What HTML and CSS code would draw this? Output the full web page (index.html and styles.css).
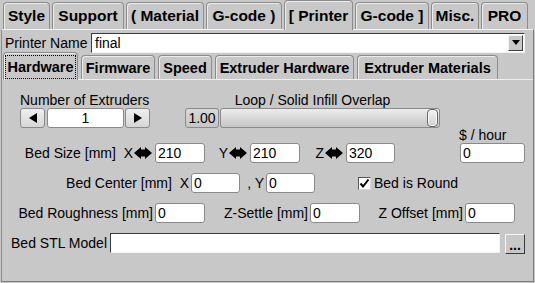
FILE: index.html
```html
<!DOCTYPE html>
<html>
<head>
<meta charset="utf-8">
<link rel="stylesheet" href="styles.css">
</head>
<body>
<div class="app">
  <div class="tabs-top">
    <div class="ttab w-style">Style</div>
    <div class="ttab w-support">Support</div>
    <div class="ttab w-material">( Material</div>
    <div class="ttab w-gcode1">G-code )</div>
    <div class="ttab sel w-printer">[ Printer</div>
    <div class="ttab w-gcode2">G-code ]</div>
    <div class="ttab w-misc">Misc.</div>
    <div class="ttab w-pro">PRO</div>
  </div>
  <div class="panel">
    <div class="pname">
      <span>Printer Name</span>
      <div class="choice">
        <span class="choice-val">final</span>
        <span class="ddbtn"><svg width="8" height="6" viewBox="0 0 8 6"><polygon points="0,0 8,0 4,5" fill="#000"/></svg></span>
      </div>
    </div>
    <div class="tabs-sub">
      <div class="stab sel w-hw"><span class="focus">Hardware</span></div>
      <div class="stab w-fw">Firmware</div>
      <div class="stab w-sp">Speed</div>
      <div class="stab w-eh">Extruder Hardware</div>
      <div class="stab w-em">Extruder Materials</div>
    </div>
    <div class="sub">
      <div class="row-a">
        <div class="extr">
          <div class="cap">Number of Extruders</div>
          <div class="counter">
            <div class="cbtn"><svg width="8" height="10" viewBox="0 0 8 10"><polygon points="0,5 8,0 8,10" fill="#000"/></svg></div>
            <div class="cval">1</div>
            <div class="cbtn"><svg width="8" height="10" viewBox="0 0 8 10"><polygon points="0,0 8,5 0,10" fill="#000"/></svg></div>
          </div>
        </div>
        <div class="loop">
          <div class="cap center">Loop / Solid Infill Overlap</div>
          <div class="slider">
            <div class="sval">1.00</div>
            <div class="track"><div class="knob"></div></div>
          </div>
        </div>
      </div>
      <div class="row-hour">$ / hour</div>
      <div class="row">
        <div class="g g-size"><span>Bed Size [mm]  X</span><svg class="arr" viewBox="0 0 18 12"><polygon points="0,6 7,0 7,2.5 11,2.5 11,0 18,6 11,12 11,9.5 7,9.5 7,12" fill="#000"/></svg><div class="in">210</div></div>
        <div class="g g-yz"><span>Y</span><svg class="arr" viewBox="0 0 18 12"><polygon points="0,6 7,0 7,2.5 11,2.5 11,0 18,6 11,12 11,9.5 7,9.5 7,12" fill="#000"/></svg><div class="in">210</div></div>
        <div class="g g-yz"><span>Z</span><svg class="arr" viewBox="0 0 18 12"><polygon points="0,6 7,0 7,2.5 11,2.5 11,0 18,6 11,12 11,9.5 7,9.5 7,12" fill="#000"/></svg><div class="in w49">320</div></div>
        <div class="in hour">0</div>
      </div>
      <div class="row gap">
        <div class="g g-center"><span>Bed Center [mm]  X</span><div class="in w49">0</div></div>
        <div class="g g-cy"><span>, Y</span><div class="in w49">0</div></div>
        <div class="chk"><svg width="11" height="11" viewBox="0 0 11 11"><polyline points="1.5,5.5 4,8.5 9.5,1.5" fill="none" stroke="#000" stroke-width="2"/></svg></div>
        <span class="chk-lbl">Bed is Round</span>
      </div>
      <div class="row gap">
        <div class="g g-rough"><span>Bed Roughness [mm]</span><div class="in">0</div></div>
        <div class="g g-settle"><span>Z-Settle [mm]</span><div class="in">0</div></div>
        <div class="g g-settle"><span>Z Offset [mm]</span><div class="in">0</div></div>
      </div>
      <div class="row gap">
        <div class="g g-stl"><span>Bed STL Model</span><div class="stl"></div></div>
        <div class="dots">...</div>
      </div>
    </div>
  </div>
</div>
</body>
</html>
```
FILE: styles.css
```css
* { box-sizing: border-box; }
body {
  margin: 0;
  background: #c8c8c8;
  font-family: "Liberation Sans", Arial, sans-serif;
  font-size: 14px;
  color: #000;
}
.app { width: 535px; height: 283px; overflow: hidden; }

/* top tabs */
.tabs-top {
  display: flex;
  align-items: flex-end;
  gap: 2px;
  padding-left: 3px;
  height: 29px;
  position: relative;
  z-index: 1;
}
.ttab {
  height: 27px;
  border: 1px solid #8c8c8c;
  border-bottom: 0;
  border-radius: 4px 4px 0 0;
  background: #c8c8c8;
  box-shadow: inset 1px 1px 0 #ececec;
  font-weight: bold;
  font-size: 15.5px;
  display: flex;
  align-items: center;
  justify-content: center;
  white-space: nowrap;
  flex: none;
}
.ttab.sel { height: 30px; margin-bottom: -1px; }
.w-style { width: 47px; }
.w-support { width: 72px; }
.w-material { width: 78px; }
.w-gcode1 { width: 76px; }
.w-printer { width: 69px; }
.w-gcode2 { width: 74px; }
.w-misc { width: 48px; }
.w-pro { width: 47px; }

/* main panel */
.panel {
  margin-left: 1px;
  width: 533px;
  height: 253px;
  border: 1px solid;
  border-color: #f2f2f2 #7c7c7c #7c7c7c #8a8a8a;
  display: flex;
  flex-direction: column;
}
.pname {
  display: flex;
  align-items: center;
  height: 20px;
  margin-top: 3px;
  padding-left: 3px;
}
.choice {
  margin-left: auto;
  margin-right: 8px;
  width: 434px;
  height: 20px;
  background: #fff;
  border: 1px solid;
  border-color: #3a3a3a #f4f4f4 #f4f4f4 #3a3a3a;
  display: flex;
  align-items: center;
  padding-left: 3px;
}
.choice-val { flex: 1; }
.ddbtn {
  width: 15px;
  height: 16px;
  margin-right: 1px;
  background: #c8c8c8;
  border: 1px solid;
  border-color: #f4f4f4 #404040 #404040 #f4f4f4;
  display: flex;
  align-items: center;
  justify-content: center;
}

/* sub tabs */
.tabs-sub {
  display: flex;
  align-items: flex-end;
  gap: 3px;
  padding-left: 1px;
  height: 26px;
  position: relative;
  z-index: 1;
}
.stab {
  height: 24px;
  border: 1px solid #8c8c8c;
  border-bottom: 0;
  border-radius: 4px 4px 0 0;
  background: #c8c8c8;
  box-shadow: inset 1px 1px 0 #ececec;
  font-weight: bold;
  font-size: 14.5px;
  display: flex;
  align-items: center;
  justify-content: center;
  white-space: nowrap;
  flex: none;
}
.stab.sel {
  height: 28px;
  margin-bottom: -1px;
  padding: 2px 1px 1px 1px;
  align-items: stretch;
}
.focus {
  flex: 1;
  border: 1px dotted #000;
  display: flex;
  align-items: center;
  justify-content: center;
}
.w-hw { width: 75px; }
.w-fw { width: 74px; }
.w-sp { width: 54px; }
.w-eh { width: 139px; }
.w-em { width: 141px; }

.sub {
  flex: 1;
  border-top: 1px solid #eeeeee;
}

/* first row: counter + slider */
.row-a { display: flex; margin-top: 12px; }
.extr { margin-left: 18px; display: flex; flex-direction: column; }
.cap { height: 16px; line-height: 16px; white-space: nowrap; }
.center { text-align: center; }
.counter { display: flex; height: 20px; }
.cbtn {
  width: 25px;
  height: 20px;
  border: 1px solid #8a8a8a;
  border-radius: 3px;
  background: linear-gradient(#efefef, #d6d6d6);
  display: flex;
  align-items: center;
  justify-content: center;
}
.cval {
  width: 77px;
  margin: 0 1px 0 2px;
  background: #fff;
  border: 1px solid #8a8a8a;
  border-radius: 3px;
  text-align: center;
  line-height: 18px;
}
.loop { margin-left: 35px; width: 255px; display: flex; flex-direction: column; }
.slider { display: flex; height: 20px; }
.sval {
  width: 34px;
  border: 1px solid #8a8a8a;
  border-radius: 3px;
  background: linear-gradient(#d8d8d8, #c6c6c6);
  text-align: center;
  line-height: 18px;
}
.track {
  margin-left: 1px;
  width: 220px;
  border: 1px solid #8a8a8a;
  border-radius: 3px;
  background: linear-gradient(#ececec, #c6c6c6);
  display: flex;
  justify-content: flex-end;
  padding: 0 1px;
}
.knob {
  width: 11px;
  border: 1px solid #666;
  border-radius: 4px;
  background: linear-gradient(#f4f4f4, #d0d0d0);
  box-shadow: inset 0 0 0 1px #fafafa;
}

.row-hour { height: 15px; line-height: 15px; padding-left: 457px; }

/* form rows */
.row { display: flex; align-items: center; height: 20px; flex: none; }
.row.gap { margin-top: 10px; }
.g {
  display: flex;
  align-items: center;
  justify-content: flex-end;
  flex: none;
  white-space: pre;
}
.g-size { width: 203px; }
.g-yz { width: 95px; }
.g-center { width: 238px; }
.g-cy { width: 75px; }
.g-rough { width: 203px; }
.g-settle { width: 155px; }
.g-stl { width: 498px; }
.arr { width: 18px; height: 12px; margin-left: 1px; flex: none; }
.in {
  width: 50px;
  height: 20px;
  margin-left: 2px;
  padding-left: 2px;
  background: #fff;
  border: 1px solid #8a8a8a;
  border-radius: 3px;
  line-height: 18px;
  flex: none;
}
.arr + .in { margin-left: 3px; }
.in.w49 { width: 49px; }
.in.hour { margin-left: 65px; width: 65px; }
.chk {
  margin-left: 43px;
  width: 13px;
  height: 13px;
  background: #fff;
  border: 1px solid;
  border-color: #555 #d8d8d8 #d8d8d8 #555;
  display: flex;
  align-items: center;
  justify-content: center;
  flex: none;
}
.chk-lbl { margin-left: 3px; }
.stl {
  width: 390px;
  height: 20px;
  margin-left: 3px;
  background: #fff;
  border: 1px solid;
  border-color: #3a3a3a #f4f4f4 #f4f4f4 #3a3a3a;
  flex: none;
}
.dots {
  margin-left: 5px;
  margin-top: 2px;
  width: 20px;
  height: 20px;
  border: 1px solid;
  border-color: #f4f4f4 #3a3a3a #3a3a3a #f4f4f4;
  font-weight: bold;
  text-align: center;
  line-height: 20px;
  flex: none;
}
```
